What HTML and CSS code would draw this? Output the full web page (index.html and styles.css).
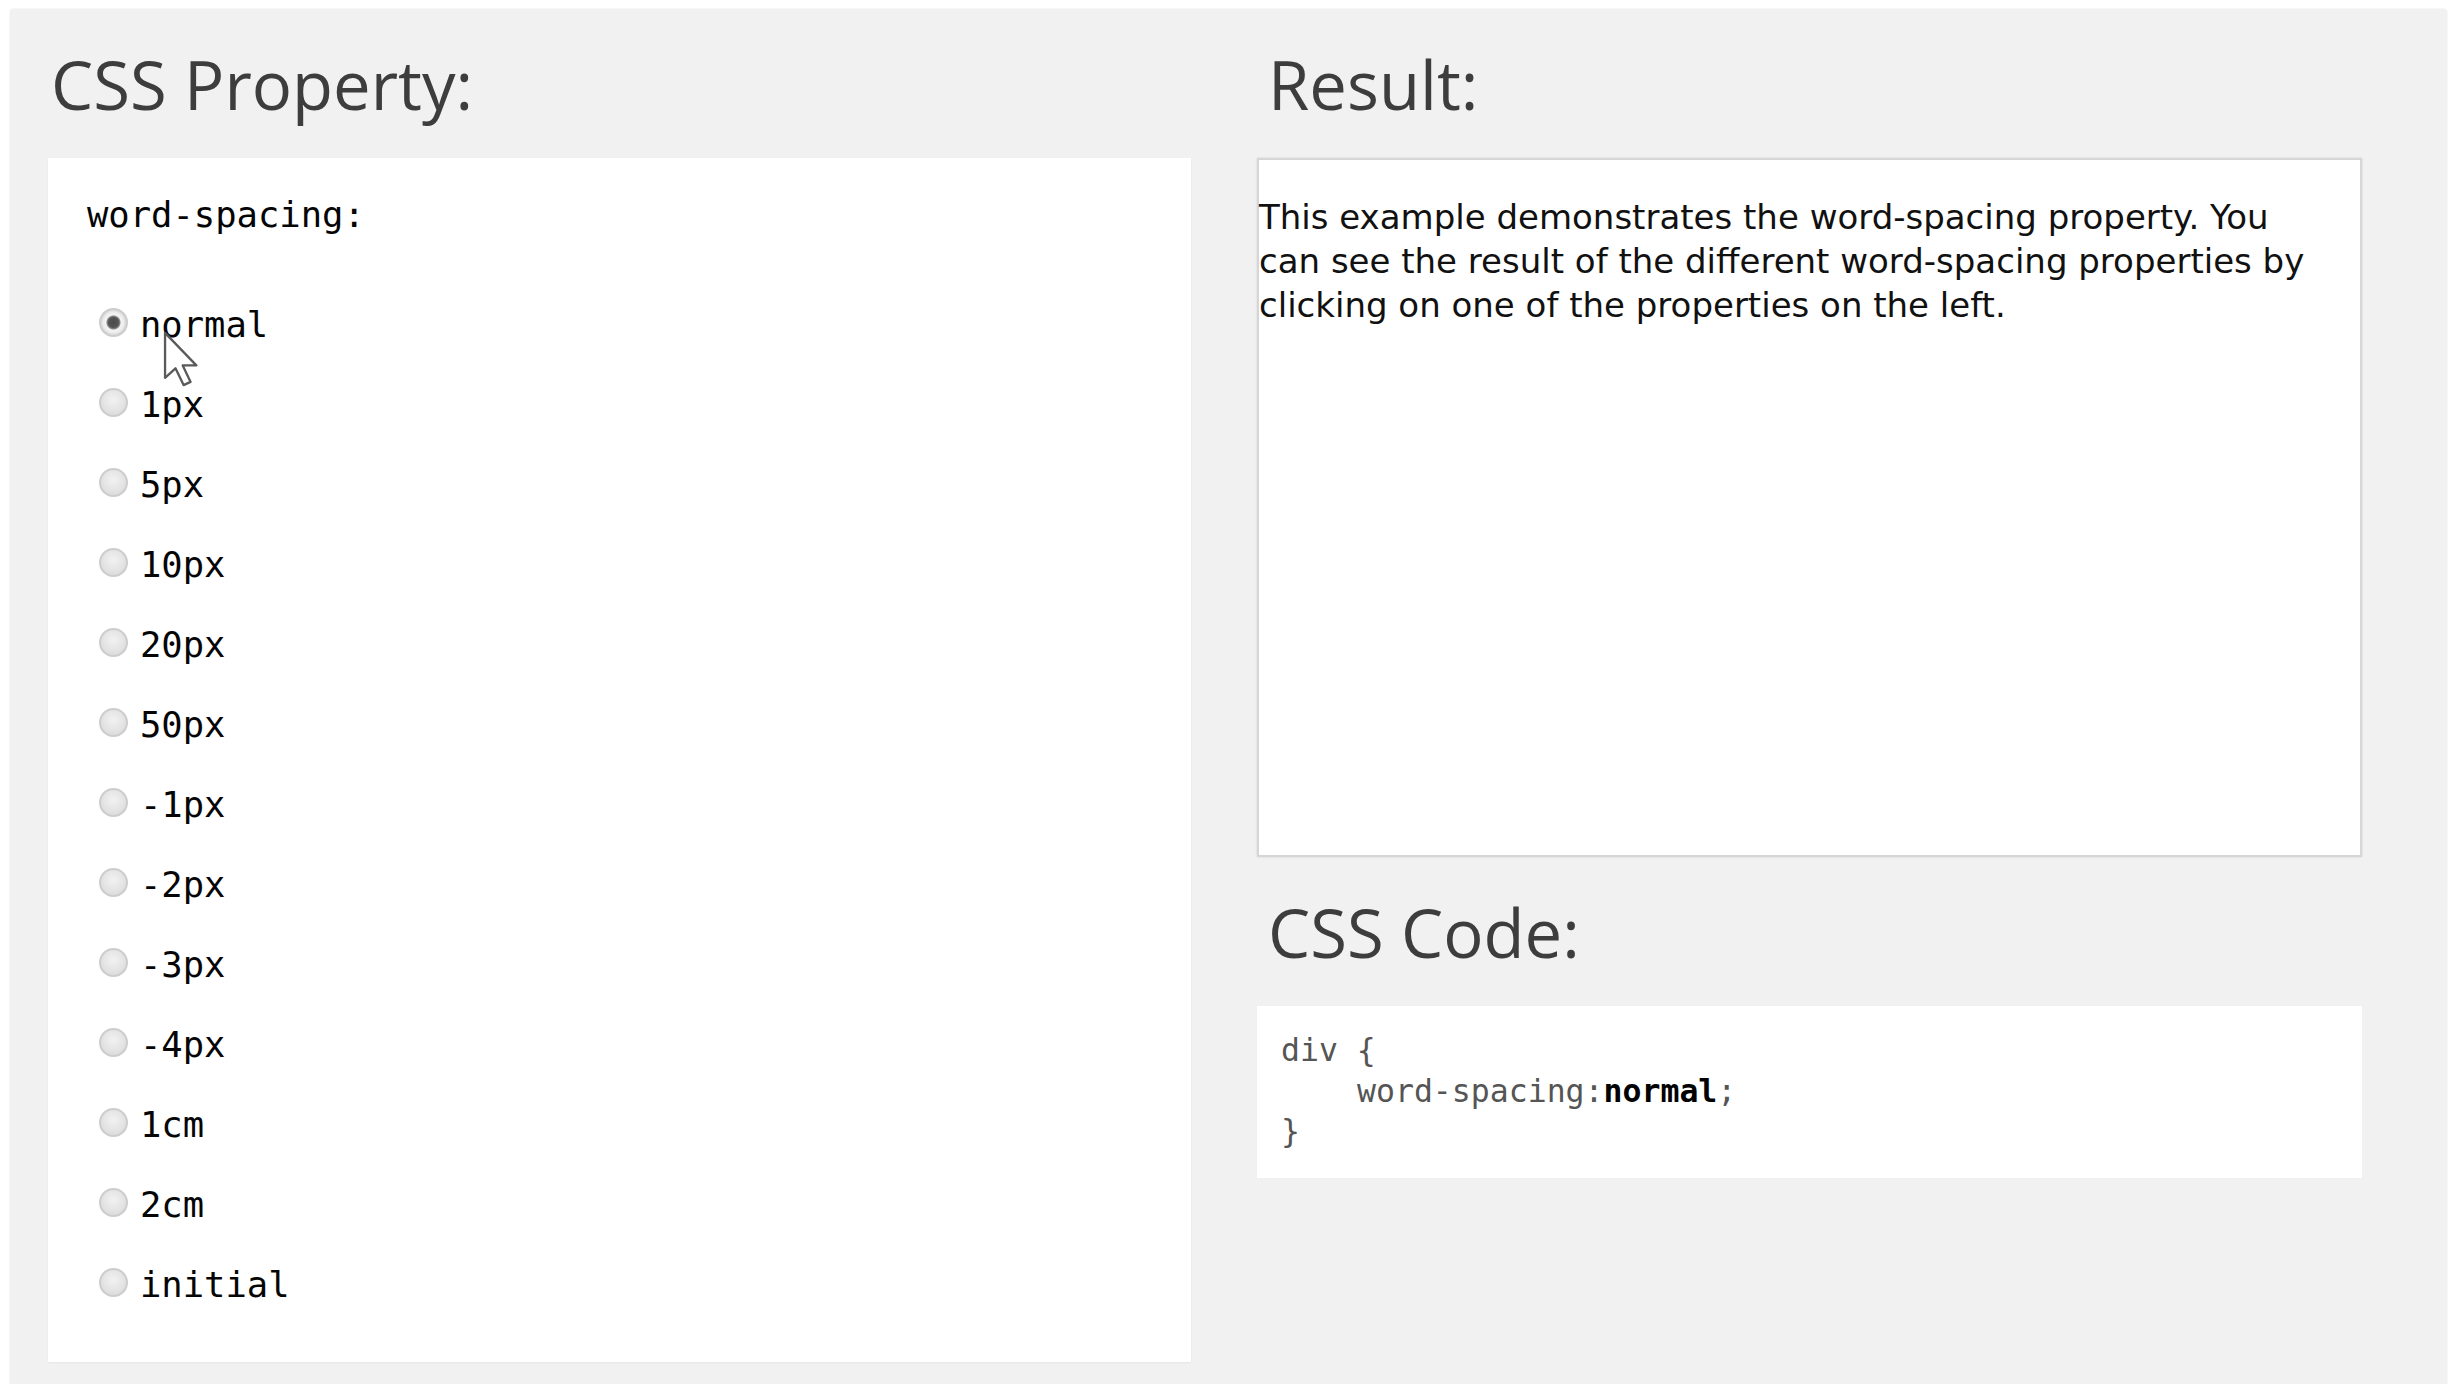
FILE: index.html
```html
<!DOCTYPE html>
<html lang="en">
<head>
<meta charset="utf-8">
<title>CSS word-spacing</title>
<link rel="stylesheet" href="styles.css">
</head>
<body>
<div class="frame">
  <section class="col">
    <h2 class="title">CSS Property:</h2>
    <div class="panel props">
      <p class="prop-name">word-spacing:</p>
      <div class="options">
        <label class="opt"><input type="radio" name="ws" checked><span>normal</span>
          <svg class="cursor" viewBox="0 0 13 20" width="40" height="58"><path d="M1 1 L1 16.5 L4.6 13.2 L7.4 19 L9.8 17.9 L7.1 12.2 L11.8 12.2 Z" fill="#fff" stroke="#5a5a5a" stroke-width="0.8" stroke-linejoin="round"/></svg>
        </label>
        <label class="opt"><input type="radio" name="ws"><span>1px</span></label>
        <label class="opt"><input type="radio" name="ws"><span>5px</span></label>
        <label class="opt"><input type="radio" name="ws"><span>10px</span></label>
        <label class="opt"><input type="radio" name="ws"><span>20px</span></label>
        <label class="opt"><input type="radio" name="ws"><span>50px</span></label>
        <label class="opt"><input type="radio" name="ws"><span>-1px</span></label>
        <label class="opt"><input type="radio" name="ws"><span>-2px</span></label>
        <label class="opt"><input type="radio" name="ws"><span>-3px</span></label>
        <label class="opt"><input type="radio" name="ws"><span>-4px</span></label>
        <label class="opt"><input type="radio" name="ws"><span>1cm</span></label>
        <label class="opt"><input type="radio" name="ws"><span>2cm</span></label>
        <label class="opt"><input type="radio" name="ws"><span>initial</span></label>
      </div>
    </div>
  </section>
  <section class="col">
    <h2 class="title indent">Result:</h2>
    <div class="result">
      <p>This example demonstrates the word-spacing property. You can see the result of the different word-spacing properties by clicking on one of the properties on the left.</p>
    </div>
    <h2 class="title indent">CSS Code:</h2>
    <div class="code">
      <div class="ln"><span>div {</span></div>
      <div class="ln ind"><span>word-spacing:</span><b>normal</b><span>;</span></div>
      <div class="ln"><span>}</span></div>
    </div>
  </section>
</div>
</body>
</html>
```
FILE: styles.css
```css
html, body {
  margin: 0;
  padding: 0;
  background: #ffffff;
}

body {
  font-family: "DejaVu Sans", Verdana, sans-serif;
}

.frame {
  margin: 9px 4px 0 10px;
  padding: 0 85px 22px 38px;
  background: #f1f1f1;
  display: grid;
  grid-template-columns: 1143px 1105px;
  column-gap: 66px;
  align-items: start;
  border-radius: 4px 4px 0 0;
  box-shadow: 0 0 2px rgba(0, 0, 0, 0.12);
}

.col {
  display: flex;
  flex-direction: column;
}

.title {
  margin: 43px 0 42px 0;
  padding-left: 3px;
  font-family: "Open Sans", "Noto Sans", sans-serif;
  font-weight: 400;
  font-size: 67px;
  line-height: 64px;
  color: #3d3d3d;
}

.title.indent {
  padding-left: 11px;
}

.panel {
  background: #ffffff;
  box-shadow: 0 1px 2px rgba(0, 0, 0, 0.05);
}

.props {
  padding: 35px 20px 38px 39px;
}

.prop-name {
  margin: 0;
  font-family: "DejaVu Sans Mono", monospace;
  font-size: 35.5px;
  line-height: 44px;
  color: #050505;
}

.options {
  margin-top: 47px;
  display: flex;
  flex-direction: column;
}

.opt {
  position: relative;
  display: flex;
  align-items: center;
  height: 80px;
  margin-left: 12px;
  font-family: "DejaVu Sans Mono", monospace;
  font-size: 35.5px;
  color: #050505;
}

.opt input {
  appearance: none;
  -webkit-appearance: none;
  width: 29px;
  height: 29px;
  margin: 0 12px 3px 0;
  border-radius: 50%;
  border: 2px solid #cdcdcd;
  box-sizing: border-box;
  background: radial-gradient(circle at 50% 40%, #f2f2f2 0, #e2e2e2 60%, #d6d6d6 100%);
  flex: none;
}

.opt input:checked {
  background: radial-gradient(circle, #4a4a4a 0, #555 5px, #8a8a8a 6.5px, #f3f3f3 7.5px, #eeeeee 10px, #d8d8d8 12.5px);
}

.cursor {
  position: absolute;
  left: 62px;
  top: 46px;
}

.result {
  background: #ffffff;
  border: 2px solid #d6d6d6;
  box-shadow: 0 0 2px rgba(0, 0, 0, 0.12);
  height: 699px;
  box-sizing: border-box;
}

.result p {
  margin: 35px 0 0 0;
  padding-right: 30px;
  font-family: "DejaVu Sans", Verdana, sans-serif;
  font-size: 34px;
  line-height: 44px;
  color: #111;
}

.code {
  padding: 24px 21px 26px 24px;
  background: #ffffff;
  font-family: "DejaVu Sans Mono", monospace;
  font-size: 31.5px;
  line-height: 40.6px;
  color: #555;
}

.ln {
  height: 40.6px;
  white-space: pre;
}

.ln.ind {
  padding-left: 76px;
}

.code b {
  color: #000;
  font-weight: 700;
}
```
